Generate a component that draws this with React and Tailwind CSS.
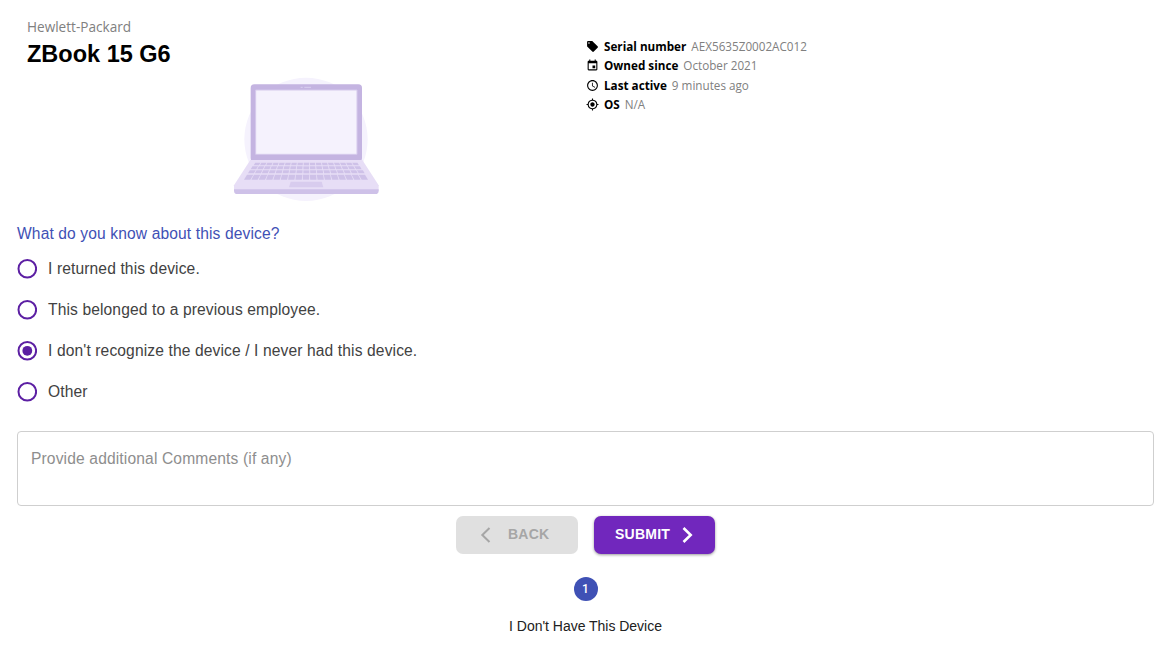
import { useState } from "react";
import { MdLocalOffer, MdEvent, MdAccessTime, MdMyLocation } from "react-icons/md";

const details = [
  { Icon: MdLocalOffer, label: "Serial number", value: "AEX5635Z0002AC012" },
  { Icon: MdEvent, label: "Owned since", value: "October 2021" },
  { Icon: MdAccessTime, label: "Last active", value: "9 minutes ago" },
  { Icon: MdMyLocation, label: "OS", value: "N/A" },
];

const options = [
  "I returned this device.",
  "This belonged to a previous employee.",
  "I don't recognize the device / I never had this device.",
  "Other",
];

const keyRows = [
  { y: 293, h: 8, x0: 101, x1: 420 },
  { y: 304, h: 9, x0: 92, x1: 428 },
  { y: 316, h: 9, x0: 84, x1: 437 },
  { y: 329, h: 15, x0: 72, x1: 447 },
];

function Laptop() {
  return (
    <svg width="147" height="125" viewBox="39 36 441 375" aria-hidden="true">
      <circle cx="258" cy="223" r="185" fill="#f5f2fd" />
      <rect x="92" y="58" width="334" height="232" rx="11" fill="#c4b4e1" />
      <path d="M107 75H411V268H107z" fill="#f5f2fd" stroke="#d5c9ec" strokeWidth="3" />
      <path d="M242 67h6M253 67h20" stroke="#d9cff0" strokeWidth="3" />
      <path d="M91 285H427L476 361V378H42V361z" fill="#e7def6" />
      <path d="M42 373H476V377Q476 387 466 387H52Q42 387 42 377z" fill="#cec1e8" />
      {keyRows.map((r) => {
        const step = (r.x1 - r.x0) / 17;
        return Array.from({ length: 17 }, (_, i) => {
          const x = r.x0 + i * step;
          const lean = ((8 - i) / 8) * r.h * 0.6;
          return (
            <path
              key={`${r.y}-${i}`}
              d={`M${x + lean} ${r.y}h${step - 3}l${-lean} ${r.h}h${-(step - 3)}z`}
              fill="#cec1e8"
            />
          );
        });
      })}
      <path d="M212 350H305L310 367H207z" fill="#d8ccee" />
    </svg>
  );
}

function Radio({ checked }) {
  return (
    <svg width="20" height="20" viewBox="0 0 20 20" className="shrink-0" aria-hidden="true">
      <circle cx="10.3" cy="9.8" r="8.8" fill="none" stroke="#5c1fa3" strokeWidth="2" />
      {checked && <circle cx="10.3" cy="9.8" r="4.9" fill="#5c1fa3" />}
    </svg>
  );
}

export default function App() {
  const [selected, setSelected] = useState(2);
  return (
    <main className="h-[648px] w-[1171px] overflow-hidden bg-white px-[17px] font-['Liberation_Sans',Arial,sans-serif]">
      <section className="flex h-[222px]">
        <div className="w-[569px] pl-[10px] pt-[17px]">
          <p className="h-5 font-['Open_Sans',sans-serif] text-[13.6px] leading-5 text-[#808080]">Hewlett-Packard</p>
          <h1 className="h-10 pt-[3px] text-[23.5px] font-bold leading-[29px] text-black">ZBook 15 G6</h1>
          <div className="pl-[206px]">
            <Laptop />
          </div>
        </div>
        <ul className="pt-[36.7px] font-['Open_Sans',sans-serif] text-[11.7px]">
          {details.map(({ Icon, label, value }) => (
            <li key={label} className="flex h-[19.4px] items-center whitespace-nowrap leading-[19px]">
              <Icon className="mr-[5px] size-[13px] text-black" />
              <b className="mr-[5px] font-bold text-black">{label}</b>
              <span className="text-[#808080]">{value}</span>
            </li>
          ))}
        </ul>
      </section>

      <fieldset>
        <legend className="h-[26px] text-[15.6px] leading-[23px] tracking-[0.12px] text-[#3f51b5]">
          What do you know about this device?
        </legend>
        <div className="flex flex-col">
          {options.map((text, i) => (
            <button
              key={text}
              type="button"
              role="radio"
              aria-checked={selected === i}
              onClick={() => setSelected(i)}
              className="flex h-[41px] items-center gap-[11px] text-left text-[15.6px] leading-6 tracking-[0.12px] text-[#424242]"
            >
              <Radio checked={selected === i} />
              {text}
            </button>
          ))}
        </div>
      </fieldset>

      <textarea
        placeholder="Provide additional Comments (if any)"
        className="mt-[19px] block h-[75px] w-[1136.5px] resize-none rounded border border-[#cfcfcf] px-[13px] py-[17px] text-[15.6px] leading-5 tracking-[0.14px] outline-none placeholder:text-[#8e8e8e]"
      />

      <div className="mt-[9.5px] flex justify-center gap-[15.5px] text-[14px] font-bold tracking-[0.25px]">
        <button type="button" disabled className="flex h-[38.5px] w-[122px] items-center rounded-[7px] bg-[#e0e0e0] pl-[24px] text-[#a6a6a6]">
          <svg width="11" height="18" viewBox="0 0 11 18" fill="none" stroke="currentColor" strokeWidth="2" className="mr-[17px]">
            <path d="M9.5 2 2.3 9l7.2 7" />
          </svg>
          BACK
        </button>
        <button type="button" className="flex h-[38.5px] w-[121.5px] items-center rounded-[7px] bg-[#7127bd] pl-[21.5px] text-white shadow-[0_1px_3px_rgba(0,0,0,0.4)]">
          SUBMIT
          <svg width="11" height="18" viewBox="0 0 11 18" fill="none" stroke="currentColor" strokeWidth="2.6" className="ml-[12px]">
            <path d="M1.5 2 8.7 9l-7.2 7" />
          </svg>
        </button>
      </div>

      <div className="mt-[23px] flex flex-col items-center">
        <span className="flex size-6 items-center justify-center rounded-full bg-[#3f51b5] font-[Roboto] text-[12px] font-medium leading-none text-white">1</span>
        <span className="mt-[15px] text-[14px] leading-5 tracking-[-0.02px] text-[#212121]">I Don't Have This Device</span>
      </div>
    </main>
  );
}
